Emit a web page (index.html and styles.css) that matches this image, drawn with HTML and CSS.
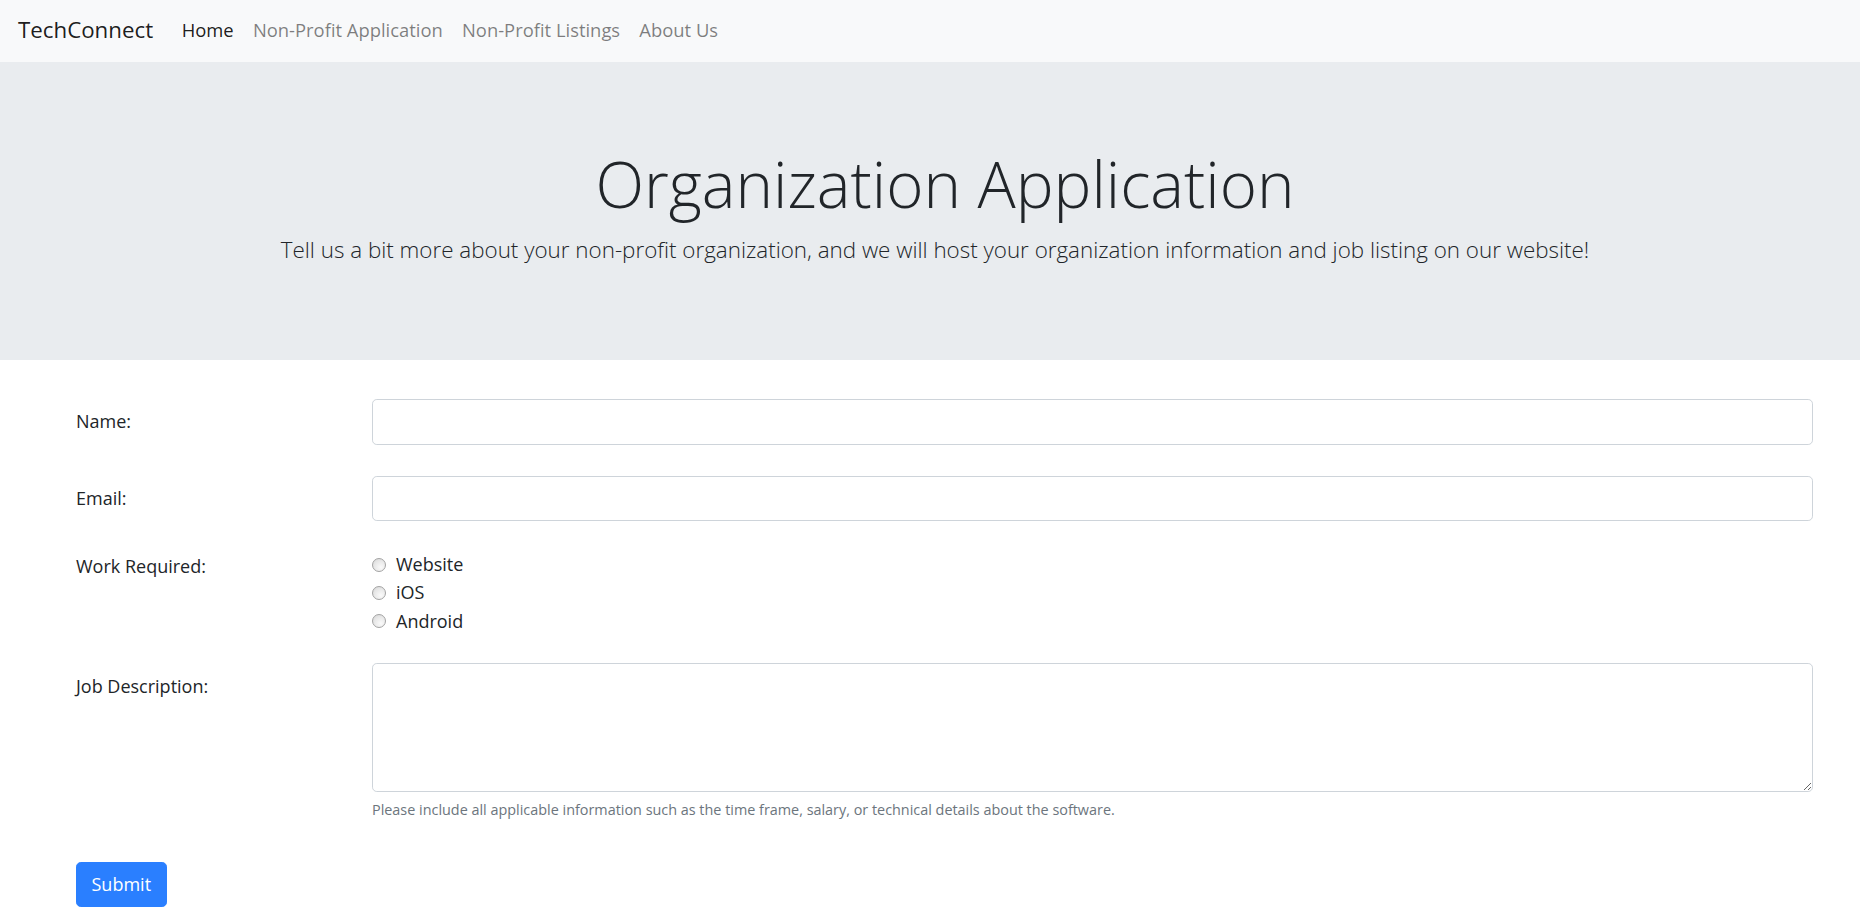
FILE: index.html
```html
<!DOCTYPE html>
<html lang="en">
<head>
  <meta charset="UTF-8" />
  <meta name="viewport" content="width=device-width, initial-scale=1.0"/>
  <title>TechConnect - Organization Application</title>
  <link rel="stylesheet" href="styles.css">
</head>
<body>
  <nav class="navbar">
    <a class="brand" href="#">TechConnect</a>
    <a class="nav-link active" href="#">Home</a>
    <a class="nav-link" href="#">Non-Profit Application</a>
    <a class="nav-link" href="#">Non-Profit Listings</a>
    <a class="nav-link" href="#">About Us</a>
  </nav>

  <header class="jumbotron">
    <h1 class="display">Organization Application</h1>
    <p class="lead">Tell us a bit more about your non-profit organization, and we will host your organization information and job listing on our website!</p>
  </header>

  <form class="app-form">
    <div class="form-row">
      <label class="col-label" for="name">Name:</label>
      <input class="form-control" type="text" id="name">
    </div>

    <div class="form-row">
      <label class="col-label" for="email">Email:</label>
      <input class="form-control" type="email" id="email">
    </div>

    <div class="form-row radios-row">
      <span class="col-label plain">Work Required:</span>
      <div class="radio-group">
        <label class="radio"><input type="radio" name="work" value="website">Website</label>
        <label class="radio"><input type="radio" name="work" value="ios">iOS</label>
        <label class="radio"><input type="radio" name="work" value="android">Android</label>
      </div>
    </div>

    <div class="form-row desc-row">
      <label class="col-label" for="desc">Job Description:</label>
      <div>
        <textarea class="form-control" id="desc"></textarea>
        <small class="help">Please include all applicable information such as the time frame, salary, or technical details about the software.</small>
      </div>
    </div>

    <button type="submit" class="btn-submit">Submit</button>
  </form>
</body>
</html>
```

FILE: styles.css
```css
* {
  box-sizing: border-box;
}

body {
  margin: 0;
  font-family: 'Open Sans', 'Noto Sans', sans-serif;
  font-size: 18px;
  line-height: 1.5;
  color: #212529;
  background-color: #fff;
}

a {
  text-decoration: none;
}

/* 导航栏 */
.navbar {
  display: flex;
  align-items: center;
  height: 62px;
  padding: 0 18px 2px;
  background-color: #f8f9fa;
}

.brand {
  font-size: 22.3px;
  color: rgba(0, 0, 0, 0.9);
  margin-right: 19px;
}

.nav-link {
  padding: 0 9.6px;
  font-size: 18.4px;
  color: rgba(0, 0, 0, 0.5);
}

.nav-link.active {
  color: rgba(0, 0, 0, 0.9);
}

/* 标题区 */
.jumbotron {
  background-color: #e9ecef;
  height: 298px;
  padding-top: 82px;
  text-align: center;
}

.display {
  margin: 0;
  padding-left: 30px;
  font-size: 63.6px;
  font-weight: 300;
  line-height: 80px;
}

.lead {
  margin: 8px 0 0;
  padding-left: 10px;
  font-size: 22.4px;
  font-weight: 300;
  line-height: 36px;
}

/* 表单 */
.app-form {
  padding: 39px 47px 0 76px;
}

.form-row {
  display: grid;
  grid-template-columns: 296px 1fr;
  margin-bottom: 31px;
}

.col-label {
  padding: 8.4px 0;
  line-height: 28.8px;
}

.col-label.plain {
  padding: 0;
}

.radios-row {
  margin-bottom: 28px;
}

.form-control {
  display: block;
  width: 100%;
  height: 45.6px;
  padding: 7.2px 14.4px;
  font: inherit;
  color: #495057;
  background-color: #fff;
  border: 1px solid #ced4da;
  border-radius: 4.8px;
}

textarea.form-control {
  height: 129px;
  resize: vertical;
}

.radio-group {
  display: flex;
  flex-direction: column;
  margin-top: -1.5px;
}

.radio {
  display: flex;
  align-items: center;
  height: 28.2px;
}

.radio input {
  appearance: none;
  -webkit-appearance: none;
  width: 14px;
  height: 14px;
  margin: 0 10px 0 0;
  border: 1px solid #a3a3a3;
  border-radius: 50%;
  background: radial-gradient(circle at 65% 70%, #fafafa 0%, #e8e8e8 55%, #d4d4d4 100%);
}

.help {
  display: block;
  margin-top: 5.5px;
  font-size: 14.4px;
  line-height: 23px;
  color: #6c757d;
}

.desc-row {
  margin-bottom: 41px;
}

.btn-submit {
  display: block;
  height: 45px;
  padding: 7.2px 14.5px;
  font: inherit;
  line-height: 28.8px;
  color: #fff;
  background-color: #2a7fff;
  border: 1px solid #2a7fff;
  border-radius: 4.8px;
  cursor: pointer;
}
```
